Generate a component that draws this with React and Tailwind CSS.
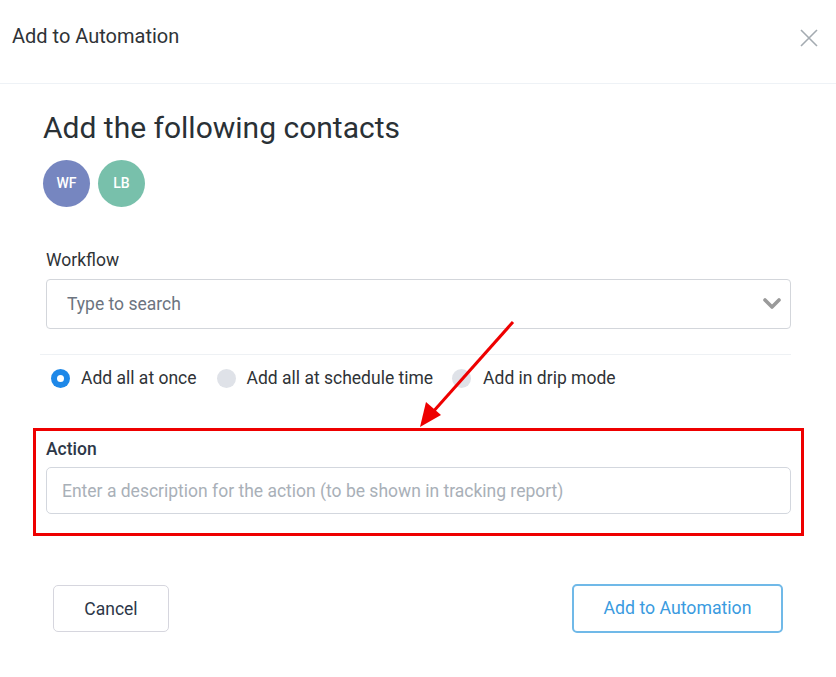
import React from "react";

export default function App() {
  return (
    <div className="relative w-[836px] h-[677px] bg-white overflow-hidden" style={{ fontFamily: "Roboto, 'Noto Sans', sans-serif" }}>
      {/* Header */}
      <div className="h-[84px] border-b border-[#eef2f6] flex items-start justify-between pl-[12px] pr-[18px] pt-[24px]">
        <div className="text-[20px] leading-[24px] text-[#2f3337]">Add to Automation</div>
        <svg width="18" height="18" viewBox="0 0 18 18" className="mt-[5px]">
          <path d="M1 1 L17 17 M17 1 L1 17" stroke="#a4abb1" strokeWidth="1.6" fill="none" />
        </svg>
      </div>

      {/* Body */}
      <div className="pl-[43px] pr-[45px] pt-[26px]">
        <h1 className="text-[30px] leading-[36px] text-[#2a3136]">Add the following contacts</h1>
        <div className="flex gap-[8px] mt-[14px]">
          <div className="w-[47px] h-[47px] rounded-full bg-[#7686c0] flex items-center justify-center text-white text-[14px] font-medium">WF</div>
          <div className="w-[47px] h-[47px] rounded-full bg-[#78c0ab] flex items-center justify-center text-white text-[14px] font-medium">LB</div>
        </div>

        <div className="pl-[3px]">
          <div className="mt-[42px] text-[17.5px] leading-[22px] text-[#2f3337]">Workflow</div>
          <div className="mt-[8px] h-[50px] border border-[#d3d6db] rounded-[4px] flex items-center justify-between pl-[20px] pr-[9px]">
            <span className="text-[17.5px] text-[#6c7480]">Type to search</span>
            <svg width="18" height="12" viewBox="0 0 18 12">
              <path d="M2 2 L9 9 L16 2" stroke="#9a9a9a" strokeWidth="3.6" fill="none" strokeLinecap="round" strokeLinejoin="round" />
            </svg>
          </div>

          <div className="mt-[25px] border-t border-[#eef1f4] ml-[-6px]" />

          <div className="mt-[10px] flex items-center text-[17.5px] text-[#2f3337] ml-[5px]">
            <div className="w-[19px] h-[19px] rounded-full bg-[#1e88e8] flex items-center justify-center">
              <div className="w-[7px] h-[7px] rounded-full bg-white" />
            </div>
            <span className="ml-[11px]">Add all at once</span>
            <div className="ml-[20px] w-[19px] h-[19px] rounded-full bg-[#dfe2e8]" />
            <span className="ml-[11px]">Add all at schedule time</span>
            <div className="ml-[19px] w-[19px] h-[19px] rounded-full bg-[#dfe2e8]" />
            <span className="ml-[12px]">Add in drip mode</span>
          </div>

          <div className="mt-[37px] mx-[-13px] border-[3px] border-[#ee0000] px-[10px] pt-[7px] pb-[19px]">
            <div className="text-[17.5px] leading-[22px] font-medium text-[#2d3748]">Action</div>
            <div className="mt-[7px] h-[47px] border border-[#d3d7de] rounded-[5px] flex items-center pl-[15px]">
              <span className="text-[17.5px] text-[#a9b0b8]">Enter a description for the action (to be shown in tracking report)</span>
            </div>
          </div>

          <div className="mt-[49px] flex justify-between pl-[7px] pr-[8px]">
            <button className="w-[116px] h-[47px] border border-[#d6d6de] rounded-[5px] text-[17.5px] text-[#2d3748] bg-white">Cancel</button>
            <button className="w-[211px] h-[49px] border-2 border-[#70b9e8] rounded-[5px] text-[17.7px] text-[#3a9be0] bg-white -mt-[1px]">Add to Automation</button>
          </div>
        </div>
      </div>

      {/* Annotation arrow */}
      <svg className="absolute left-0 top-0 pointer-events-none" width="836" height="677">
        <line x1="513" y1="322" x2="432" y2="413" stroke="#ee0000" strokeWidth="3" />
        <polygon points="420,427 426,402 441,415" fill="#ee0000" />
      </svg>
    </div>
  );
}
